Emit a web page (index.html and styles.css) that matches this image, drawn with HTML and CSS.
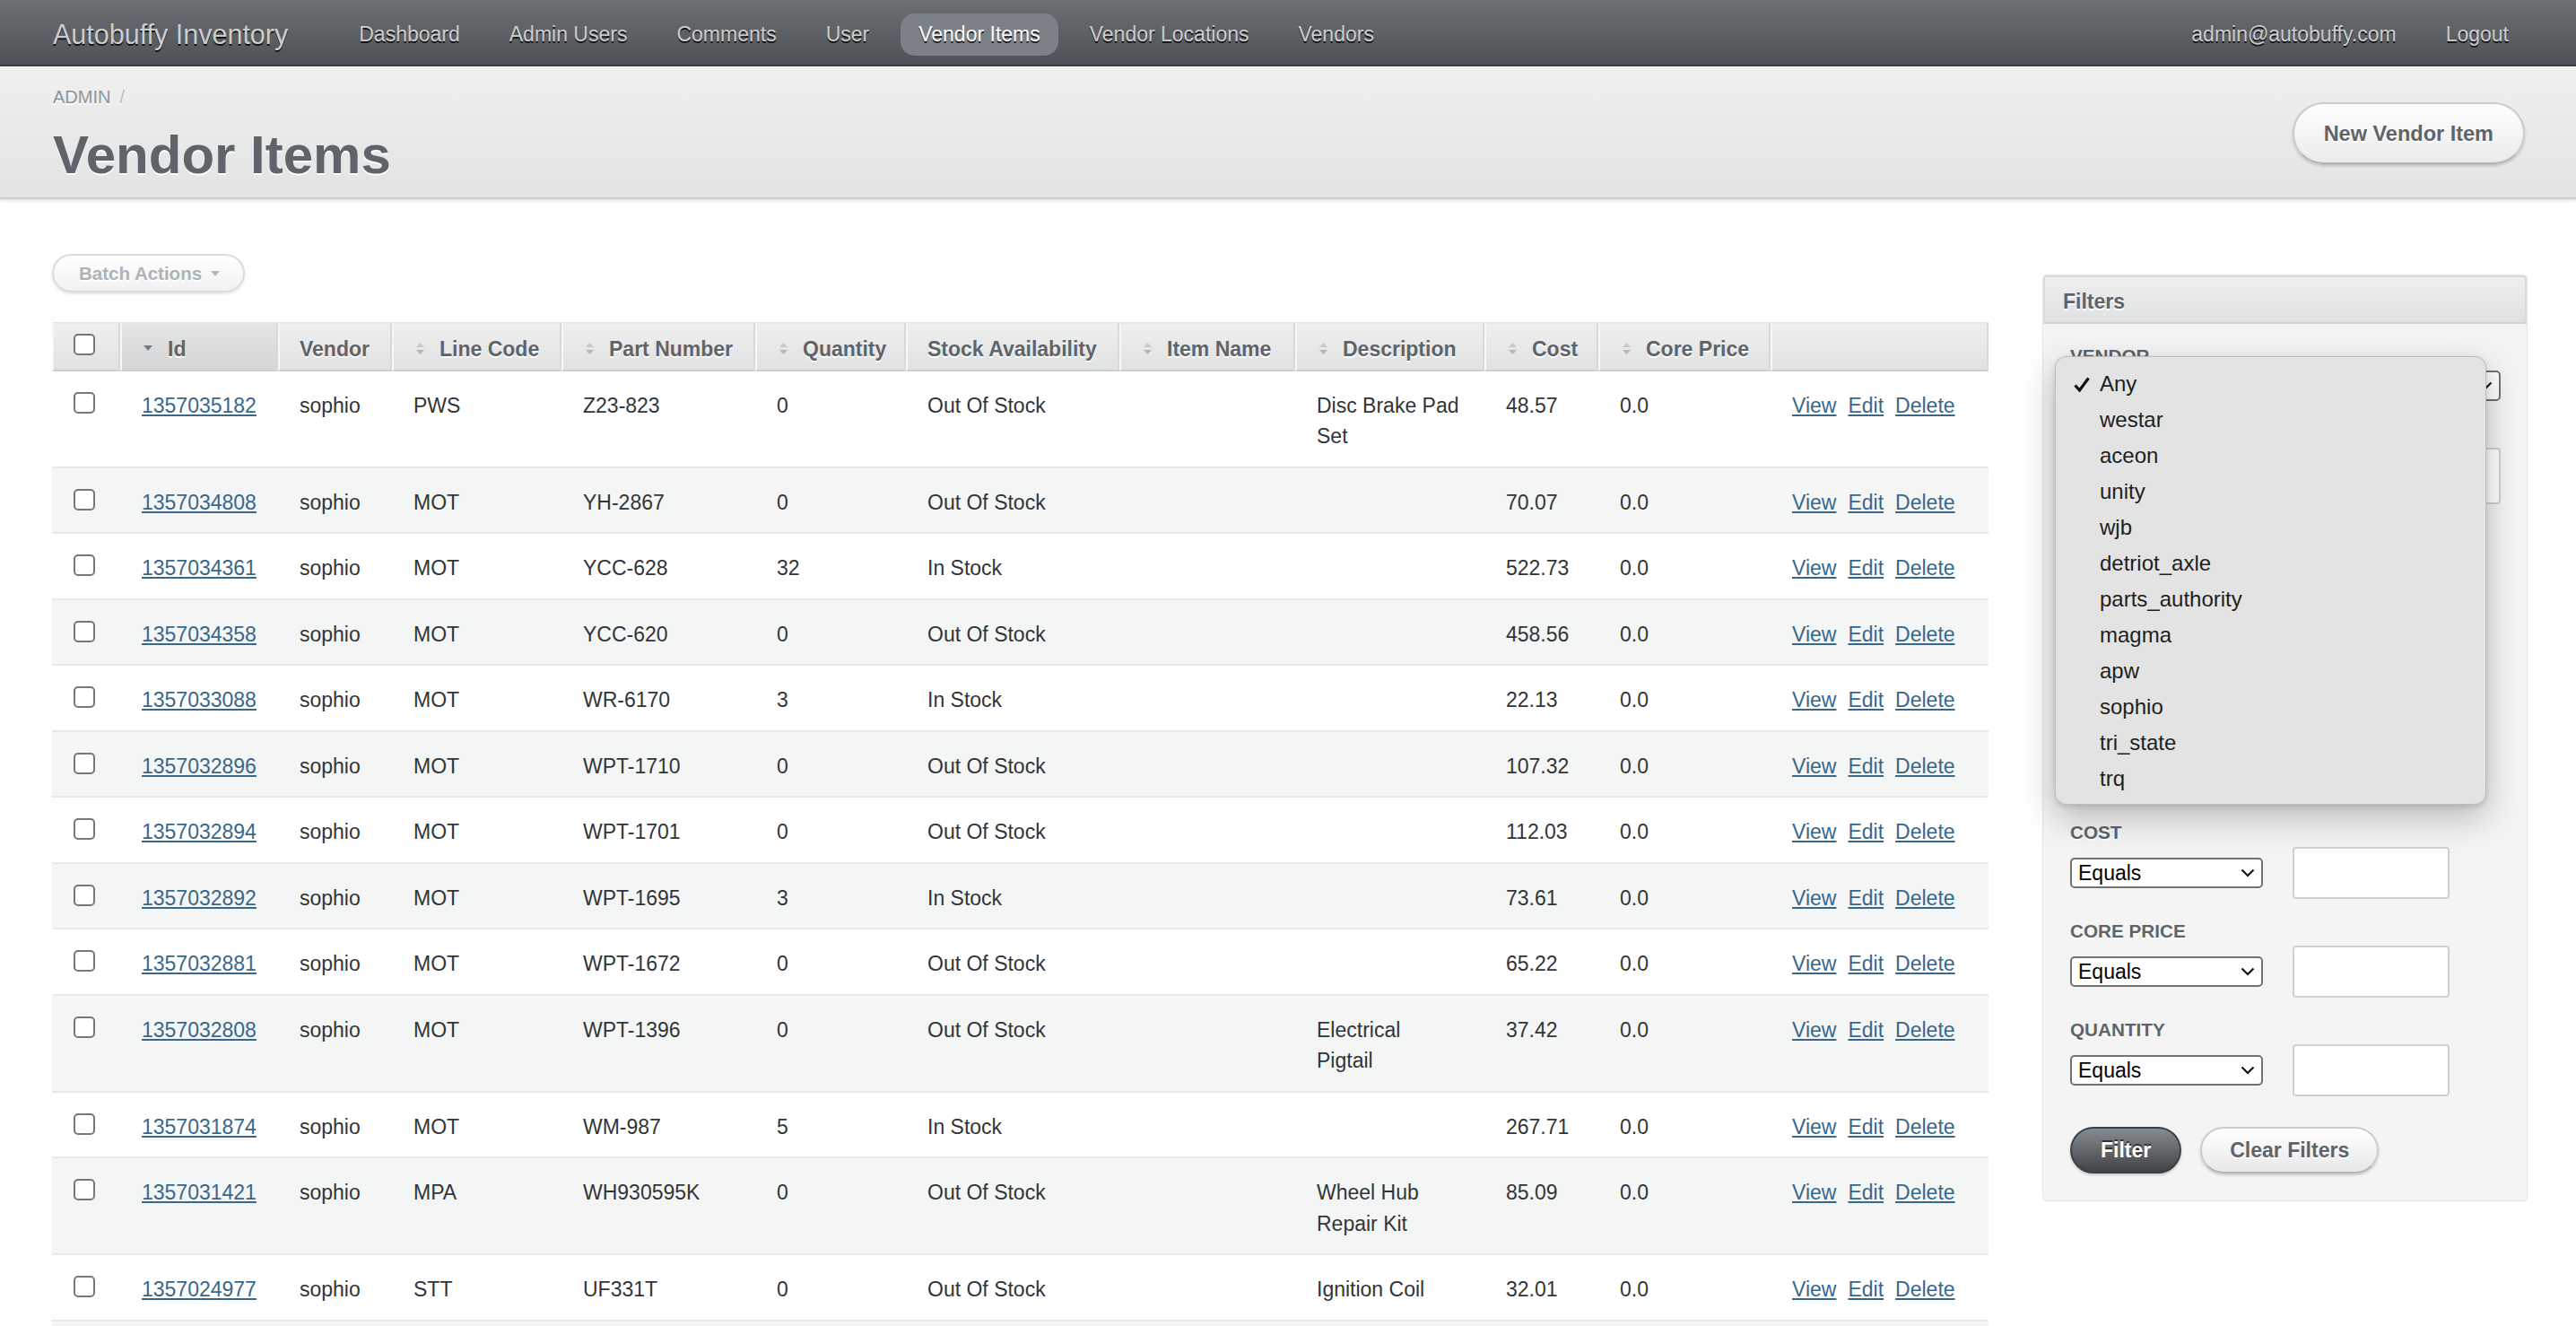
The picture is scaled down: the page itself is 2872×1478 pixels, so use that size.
FILE: index.html
```html
<!DOCTYPE html>
<html lang="en">
<head>
<meta charset="utf-8">
<title>Vendor Items | Autobuffy Inventory</title>
<link rel="stylesheet" href="styles.css">
</head>
<body>
<header class="topbar">
  <h1 class="site-title">Autobuffy Inventory</h1>
  <ul class="tabs">
    <li><a class="tab" href="#">Dashboard</a></li>
    <li><a class="tab" href="#">Admin Users</a></li>
    <li><a class="tab" href="#">Comments</a></li>
    <li><a class="tab" href="#">User</a></li>
    <li><a class="tab tab-current" href="#">Vendor Items</a></li>
    <li><a class="tab" href="#">Vendor Locations</a></li>
    <li><a class="tab" href="#">Vendors</a></li>
  </ul>
  <ul class="tabs utility">
    <li><a class="tab" href="#">admin@autobuffy.com</a></li>
    <li><a class="tab" href="#">Logout</a></li>
  </ul>
</header>

<div class="title-bar">
  <div class="title-main">
    <div class="breadcrumb"><a href="#">Admin</a><span class="crumb-sep">/</span></div>
    <h2 class="page-title">Vendor Items</h2>
  </div>
  <a class="action-btn" href="#">New Vendor Item</a>
</div>

<div class="content">
  <main class="main">
    <div class="batch">
      <button class="batch-btn" type="button">Batch Actions
        <svg class="batch-caret" width="10" height="6" viewBox="0 0 10 6"><path d="M0 0H10L5 6Z" fill="#b4b8bb"/></svg>
      </button>
    </div>

    <table class="index-table">
      <thead>
        <tr>
          <th class="c-cb"><input type="checkbox" class="cb"></th>
          <th class="c-id sorted"><a class="sort-link" href="#"><svg class="sort-ico sort-desc" width="10" height="6" viewBox="0 0 10 6"><path d="M0 0H10L5 6Z" fill="#767b80"/></svg>Id</a></th>
          <th class="c-vendor">Vendor</th>
          <th class="c-line"><a class="sort-link" href="#"><svg class="sort-ico" width="9" height="13" viewBox="0 0 9 13"><path d="M4.5 0L9 5H0Z" fill="#c6c9cc"/><path d="M0 8H9L4.5 13Z" fill="#b3b7ba"/></svg>Line Code</a></th>
          <th class="c-part"><a class="sort-link" href="#"><svg class="sort-ico" width="9" height="13" viewBox="0 0 9 13"><path d="M4.5 0L9 5H0Z" fill="#c6c9cc"/><path d="M0 8H9L4.5 13Z" fill="#b3b7ba"/></svg>Part Number</a></th>
          <th class="c-qty"><a class="sort-link" href="#"><svg class="sort-ico" width="9" height="13" viewBox="0 0 9 13"><path d="M4.5 0L9 5H0Z" fill="#c6c9cc"/><path d="M0 8H9L4.5 13Z" fill="#b3b7ba"/></svg>Quantity</a></th>
          <th class="c-stock">Stock Availability</th>
          <th class="c-item"><a class="sort-link" href="#"><svg class="sort-ico" width="9" height="13" viewBox="0 0 9 13"><path d="M4.5 0L9 5H0Z" fill="#c6c9cc"/><path d="M0 8H9L4.5 13Z" fill="#b3b7ba"/></svg>Item Name</a></th>
          <th class="c-desc"><a class="sort-link" href="#"><svg class="sort-ico" width="9" height="13" viewBox="0 0 9 13"><path d="M4.5 0L9 5H0Z" fill="#c6c9cc"/><path d="M0 8H9L4.5 13Z" fill="#b3b7ba"/></svg>Description</a></th>
          <th class="c-cost"><a class="sort-link" href="#"><svg class="sort-ico" width="9" height="13" viewBox="0 0 9 13"><path d="M4.5 0L9 5H0Z" fill="#c6c9cc"/><path d="M0 8H9L4.5 13Z" fill="#b3b7ba"/></svg>Cost</a></th>
          <th class="c-core"><a class="sort-link" href="#"><svg class="sort-ico" width="9" height="13" viewBox="0 0 9 13"><path d="M4.5 0L9 5H0Z" fill="#c6c9cc"/><path d="M0 8H9L4.5 13Z" fill="#b3b7ba"/></svg>Core Price</a></th>
          <th class="c-actions"></th>
        </tr>
      </thead>
      <tbody>
        <tr class="odd">
          <td><input type="checkbox" class="cb"></td><td><a href="#">1357035182</a></td><td>sophio</td><td>PWS</td><td>Z23-823</td><td>0</td><td>Out Of Stock</td><td></td><td>Disc Brake Pad Set</td><td>48.57</td><td>0.0</td>
          <td class="actions"><a class="member-link" href="#">View</a><a class="member-link" href="#">Edit</a><a class="member-link" href="#">Delete</a></td>
        </tr>
        <tr class="even">
          <td><input type="checkbox" class="cb"></td><td><a href="#">1357034808</a></td><td>sophio</td><td>MOT</td><td>YH-2867</td><td>0</td><td>Out Of Stock</td><td></td><td></td><td>70.07</td><td>0.0</td>
          <td class="actions"><a class="member-link" href="#">View</a><a class="member-link" href="#">Edit</a><a class="member-link" href="#">Delete</a></td>
        </tr>
        <tr class="odd">
          <td><input type="checkbox" class="cb"></td><td><a href="#">1357034361</a></td><td>sophio</td><td>MOT</td><td>YCC-628</td><td>32</td><td>In Stock</td><td></td><td></td><td>522.73</td><td>0.0</td>
          <td class="actions"><a class="member-link" href="#">View</a><a class="member-link" href="#">Edit</a><a class="member-link" href="#">Delete</a></td>
        </tr>
        <tr class="even">
          <td><input type="checkbox" class="cb"></td><td><a href="#">1357034358</a></td><td>sophio</td><td>MOT</td><td>YCC-620</td><td>0</td><td>Out Of Stock</td><td></td><td></td><td>458.56</td><td>0.0</td>
          <td class="actions"><a class="member-link" href="#">View</a><a class="member-link" href="#">Edit</a><a class="member-link" href="#">Delete</a></td>
        </tr>
        <tr class="odd">
          <td><input type="checkbox" class="cb"></td><td><a href="#">1357033088</a></td><td>sophio</td><td>MOT</td><td>WR-6170</td><td>3</td><td>In Stock</td><td></td><td></td><td>22.13</td><td>0.0</td>
          <td class="actions"><a class="member-link" href="#">View</a><a class="member-link" href="#">Edit</a><a class="member-link" href="#">Delete</a></td>
        </tr>
        <tr class="even">
          <td><input type="checkbox" class="cb"></td><td><a href="#">1357032896</a></td><td>sophio</td><td>MOT</td><td>WPT-1710</td><td>0</td><td>Out Of Stock</td><td></td><td></td><td>107.32</td><td>0.0</td>
          <td class="actions"><a class="member-link" href="#">View</a><a class="member-link" href="#">Edit</a><a class="member-link" href="#">Delete</a></td>
        </tr>
        <tr class="odd">
          <td><input type="checkbox" class="cb"></td><td><a href="#">1357032894</a></td><td>sophio</td><td>MOT</td><td>WPT-1701</td><td>0</td><td>Out Of Stock</td><td></td><td></td><td>112.03</td><td>0.0</td>
          <td class="actions"><a class="member-link" href="#">View</a><a class="member-link" href="#">Edit</a><a class="member-link" href="#">Delete</a></td>
        </tr>
        <tr class="even">
          <td><input type="checkbox" class="cb"></td><td><a href="#">1357032892</a></td><td>sophio</td><td>MOT</td><td>WPT-1695</td><td>3</td><td>In Stock</td><td></td><td></td><td>73.61</td><td>0.0</td>
          <td class="actions"><a class="member-link" href="#">View</a><a class="member-link" href="#">Edit</a><a class="member-link" href="#">Delete</a></td>
        </tr>
        <tr class="odd">
          <td><input type="checkbox" class="cb"></td><td><a href="#">1357032881</a></td><td>sophio</td><td>MOT</td><td>WPT-1672</td><td>0</td><td>Out Of Stock</td><td></td><td></td><td>65.22</td><td>0.0</td>
          <td class="actions"><a class="member-link" href="#">View</a><a class="member-link" href="#">Edit</a><a class="member-link" href="#">Delete</a></td>
        </tr>
        <tr class="even">
          <td><input type="checkbox" class="cb"></td><td><a href="#">1357032808</a></td><td>sophio</td><td>MOT</td><td>WPT-1396</td><td>0</td><td>Out Of Stock</td><td></td><td>Electrical<br>Pigtail</td><td>37.42</td><td>0.0</td>
          <td class="actions"><a class="member-link" href="#">View</a><a class="member-link" href="#">Edit</a><a class="member-link" href="#">Delete</a></td>
        </tr>
        <tr class="odd">
          <td><input type="checkbox" class="cb"></td><td><a href="#">1357031874</a></td><td>sophio</td><td>MOT</td><td>WM-987</td><td>5</td><td>In Stock</td><td></td><td></td><td>267.71</td><td>0.0</td>
          <td class="actions"><a class="member-link" href="#">View</a><a class="member-link" href="#">Edit</a><a class="member-link" href="#">Delete</a></td>
        </tr>
        <tr class="even">
          <td><input type="checkbox" class="cb"></td><td><a href="#">1357031421</a></td><td>sophio</td><td>MPA</td><td>WH930595K</td><td>0</td><td>Out Of Stock</td><td></td><td>Wheel Hub Repair Kit</td><td>85.09</td><td>0.0</td>
          <td class="actions"><a class="member-link" href="#">View</a><a class="member-link" href="#">Edit</a><a class="member-link" href="#">Delete</a></td>
        </tr>
        <tr class="odd">
          <td><input type="checkbox" class="cb"></td><td><a href="#">1357024977</a></td><td>sophio</td><td>STT</td><td>UF331T</td><td>0</td><td>Out Of Stock</td><td></td><td>Ignition Coil</td><td>32.01</td><td>0.0</td>
          <td class="actions"><a class="member-link" href="#">View</a><a class="member-link" href="#">Edit</a><a class="member-link" href="#">Delete</a></td>
        </tr>
        <tr class="even">
          <td><input type="checkbox" class="cb"></td><td><a href="#">1357024810</a></td><td>sophio</td><td>STT</td><td>UF330T</td><td>0</td><td>Out Of Stock</td><td></td><td>Ignition Coil</td><td>29.87</td><td>0.0</td>
          <td class="actions"><a class="member-link" href="#">View</a><a class="member-link" href="#">Edit</a><a class="member-link" href="#">Delete</a></td>
        </tr>
      </tbody>
    </table>
  </main>

  <aside class="sidebar">
    <section class="panel">
      <h3 class="panel-head">Filters</h3>
      <div class="panel-body">
        <div class="filter">
          <label class="filter-label">Vendor</label>
          <div class="select-wrap wide">
            <select class="select"><option>Any</option></select>
            <svg class="chev" width="16" height="10" viewBox="0 0 16 10"><path d="M1.5 1.5L8 8L14.5 1.5" fill="none" stroke="#111" stroke-width="2.2"/></svg>
          </div>
        </div>
        <div class="filter">
          <label class="filter-label">Part Number</label>
          <input class="text-input wide" type="text">
        </div>
        <div class="filter">
          <label class="filter-label">Line Code</label>
          <div class="filter-row">
            <div class="select-wrap"><select class="select"><option>Contains</option></select><svg class="chev" width="16" height="10" viewBox="0 0 16 10"><path d="M1.5 1.5L8 8L14.5 1.5" fill="none" stroke="#111" stroke-width="2.2"/></svg></div>
            <input class="text-input" type="text">
          </div>
        </div>
        <div class="filter">
          <label class="filter-label">Item Name</label>
          <div class="filter-row">
            <div class="select-wrap"><select class="select"><option>Contains</option></select><svg class="chev" width="16" height="10" viewBox="0 0 16 10"><path d="M1.5 1.5L8 8L14.5 1.5" fill="none" stroke="#111" stroke-width="2.2"/></svg></div>
            <input class="text-input" type="text">
          </div>
        </div>
        <div class="filter">
          <label class="filter-label">Description</label>
          <div class="filter-row">
            <div class="select-wrap"><select class="select"><option>Contains</option></select><svg class="chev" width="16" height="10" viewBox="0 0 16 10"><path d="M1.5 1.5L8 8L14.5 1.5" fill="none" stroke="#111" stroke-width="2.2"/></svg></div>
            <input class="text-input" type="text">
          </div>
        </div>
        <div class="filter">
          <label class="filter-label">Cost</label>
          <div class="filter-row">
            <div class="select-wrap"><select class="select"><option>Equals</option></select><svg class="chev" width="16" height="10" viewBox="0 0 16 10"><path d="M1.5 1.5L8 8L14.5 1.5" fill="none" stroke="#111" stroke-width="2.2"/></svg></div>
            <input class="text-input" type="text">
          </div>
        </div>
        <div class="filter">
          <label class="filter-label">Core Price</label>
          <div class="filter-row">
            <div class="select-wrap"><select class="select"><option>Equals</option></select><svg class="chev" width="16" height="10" viewBox="0 0 16 10"><path d="M1.5 1.5L8 8L14.5 1.5" fill="none" stroke="#111" stroke-width="2.2"/></svg></div>
            <input class="text-input" type="text">
          </div>
        </div>
        <div class="filter">
          <label class="filter-label">Quantity</label>
          <div class="filter-row">
            <div class="select-wrap"><select class="select"><option>Equals</option></select><svg class="chev" width="16" height="10" viewBox="0 0 16 10"><path d="M1.5 1.5L8 8L14.5 1.5" fill="none" stroke="#111" stroke-width="2.2"/></svg></div>
            <input class="text-input" type="text">
          </div>
        </div>
        <div class="filter-actions">
          <button class="btn-dark" type="button">Filter</button>
          <button class="btn-light" type="button">Clear Filters</button>
        </div>

        <ul class="dropdown">
          <li class="dd-item dd-selected"><svg class="dd-check" width="18" height="17" viewBox="0 0 18 17"><path d="M1.5 9.5L6.5 15L16.5 1.5" fill="none" stroke="#111" stroke-width="3.2"/></svg>Any</li>
          <li class="dd-item">westar</li>
          <li class="dd-item">aceon</li>
          <li class="dd-item">unity</li>
          <li class="dd-item">wjb</li>
          <li class="dd-item">detriot_axle</li>
          <li class="dd-item">parts_authority</li>
          <li class="dd-item">magma</li>
          <li class="dd-item">apw</li>
          <li class="dd-item">sophio</li>
          <li class="dd-item">tri_state</li>
          <li class="dd-item">trq</li>
        </ul>
      </div>
    </section>
  </aside>
</div>
</body>
</html>
```

FILE: styles.css
```css
* { box-sizing: border-box; }

html { overflow: hidden; }

body {
  margin: 0;
  background: #ffffff;
  font-family: "Liberation Sans", Arial, Helvetica, sans-serif;
  font-size: 23px;
  line-height: 34.5px;
  color: #323537;
}

a { color: #38678b; }

/* ---------- top navigation ---------- */
.topbar {
  display: flex;
  align-items: center;
  height: 74px;
  padding: 4px 55px 0 59px;
  background: linear-gradient(#6c7075, #4e5256);
  border-bottom: 2px solid #3c3f42;
}

.site-title {
  margin: 0 59px 0 0;
  font-size: 30.5px;
  line-height: 36px;
  font-weight: normal;
  color: #cdcdcd;
  white-space: nowrap;
  text-shadow: 0 2px 0 rgba(0, 0, 0, 0.8);
}

.tabs {
  display: flex;
  gap: 15px;
  list-style: none;
  margin: 0;
  padding: 0;
}

.utility { margin-left: auto; }

.tab {
  display: block;
  padding: 10px 20px;
  font-size: 23px;
  line-height: 27px;
  color: #cdcdcd;
  text-decoration: none;
  white-space: nowrap;
  border-radius: 16px;
  text-shadow: 0 2px 0 rgba(0, 0, 0, 0.8);
}

.tab-current {
  background: #7b8186;
  color: #ffffff;
}

/* ---------- title bar ---------- */
.title-bar {
  display: flex;
  height: 148px;
  padding: 19px 57px 0 59px;
  background: linear-gradient(#f0f0f0, #e2e3e4);
  border-bottom: 2px solid #cdcdcd;
  box-shadow: 0 2px 3px rgba(0, 0, 0, 0.12);
}

.title-main { flex: 1; }

.breadcrumb {
  font-size: 20px;
  line-height: 30px;
  color: #8a949e;
  text-transform: uppercase;
  text-shadow: 0 2px 0 #ffffff;
}

.breadcrumb a {
  color: #8a949e;
  text-decoration: none;
}

.crumb-sep {
  margin-left: 10px;
  color: #b3b9be;
}

.page-title {
  margin: 14px 0 0;
  font-size: 60px;
  line-height: 71px;
  font-weight: bold;
  color: #5e6469;
  text-shadow: 0 2px 0 #ffffff;
}

.action-btn {
  align-self: flex-start;
  margin-top: 21px;
  padding: 16px 33px 15px;
  font-size: 23.5px;
  line-height: 34px;
  font-weight: bold;
  color: #5e6469;
  text-decoration: none;
  white-space: nowrap;
  text-shadow: 0 2px 0 #ffffff;
  background: linear-gradient(#ffffff, #ebebeb);
  border: 2px solid #cbcbcb;
  border-bottom-color: #b5b5b5;
  border-radius: 40px;
  box-shadow: 0 2px 3px rgba(0, 0, 0, 0.18);
}

/* ---------- content ---------- */
.content {
  display: flex;
  gap: 61px;
  padding: 61px 55px 0 58px;
}

.main {
  flex: 1;
  min-width: 0;
}

.batch {
  height: 43px;
  margin-bottom: 33px;
}

.batch-btn {
  display: inline-flex;
  align-items: center;
  gap: 10px;
  height: 43px;
  padding: 0 26px 0 28px;
  font-family: "Liberation Sans", Arial, sans-serif;
  font-size: 20.5px;
  line-height: 24px;
  font-weight: bold;
  color: #aeb3b7;
  text-shadow: 0 2px 0 #ffffff;
  background: linear-gradient(#ffffff, #f1f1f1);
  border: 2px solid #dcdcdc;
  border-radius: 22px;
  box-shadow: 0 2px 3px rgba(0, 0, 0, 0.1);
}

/* ---------- index table ---------- */
.index-table {
  width: 100%;
  table-layout: fixed;
  border-collapse: separate;
  border-spacing: 0;
}

.index-table th {
  text-align: left;
  vertical-align: top;
  padding: 11px 22px 5px 22px;
  font-weight: bold;
  color: #5e6469;
  white-space: nowrap;
  text-shadow: 0 2px 0 #ffffff;
  background: linear-gradient(#efefef, #e0e1e2);
  border-top: 2px solid #e6e7e8;
  border-bottom: 2px solid #cdcecf;
  border-left: 2px solid #f7f7f7;
  border-right: 2px solid #d8d9da;
}

.index-table th.sorted {
  background: linear-gradient(#e3e4e5, #d4d6d7);
}

.c-cb { width: 76px; }
.c-id { width: 176px; }
.c-vendor { width: 127px; }
.c-line { width: 189px; }
.c-part { width: 216px; }
.c-qty { width: 168px; }
.c-stock { width: 238px; }
.c-item { width: 196px; }
.c-desc { width: 211px; }
.c-cost { width: 127px; }
.c-core { width: 192px; }

.sort-link {
  position: relative;
  display: inline-block;
  padding-left: 29px;
  color: #5e6469;
  text-decoration: none;
}

.sort-ico {
  position: absolute;
  left: 3px;
  top: 10px;
}

.sort-desc { top: 13px; left: 2px; }

.index-table td {
  vertical-align: top;
  padding: 21px 24px 16px;
  border-bottom: 2px solid #e8e9ea;
}

.index-table tr.even td { background: #f4f5f5; }

.index-table td.actions { white-space: nowrap; }

.member-link { margin-right: 13px; }

.cb {
  -webkit-appearance: none;
  appearance: none;
  display: block;
  width: 24px;
  height: 24px;
  margin: 2px 0 0;
  background: #ffffff;
  border: 2px solid #777777;
  border-radius: 5px;
}

.index-table th .cb { margin-top: 0; }

/* ---------- sidebar ---------- */
.sidebar {
  flex: none;
  width: 539px;
  margin-top: 24px;
}

.panel {
  background: #f4f4f4;
  border-radius: 4px;
  box-shadow: 0 0 0 1px #e7e7e7, 0 1px 3px rgba(0, 0, 0, 0.06);
}

.panel-head {
  margin: 0;
  height: 54px;
  padding: 10px 20px 6px;
  font-size: 23px;
  line-height: 34px;
  font-weight: bold;
  color: #5e6469;
  text-shadow: 0 2px 0 #ffffff;
  background: linear-gradient(#efefef, #e0e1e2);
  border: 2px solid #d9dadb;
  border-bottom-color: #cfd0d1;
  border-radius: 4px 4px 0 0;
}

.panel-body {
  position: relative;
  padding: 24px 29px 30px 30px;
}

.filter { margin-bottom: 24px; }

.filter-label {
  display: block;
  margin-bottom: 4px;
  font-size: 20.7px;
  line-height: 24px;
  font-weight: bold;
  color: #5e6469;
  text-transform: uppercase;
  text-shadow: 0 2px 0 #ffffff;
}

.filter-row {
  display: flex;
  align-items: center;
  gap: 33px;
}

.select-wrap {
  position: relative;
  width: 215px;
  height: 34px;
}

.select-wrap.wide { width: 480px; }

.select {
  -webkit-appearance: none;
  appearance: none;
  display: block;
  width: 100%;
  height: 34px;
  margin: 0;
  padding: 0 30px 0 7px;
  font-family: "Liberation Sans", Arial, sans-serif;
  font-size: 23px;
  color: #000000;
  background: #ffffff;
  border: 2px solid #727272;
  border-radius: 5px;
}

.chev {
  position: absolute;
  right: 9px;
  top: 12px;
  pointer-events: none;
}

.text-input {
  display: block;
  width: 175px;
  height: 58px;
  margin: 0;
  padding: 0 10px;
  background: #ffffff;
  border: 2px solid #ccd1d5;
  border-radius: 4px;
}

.text-input.wide {
  width: 480px;
  height: 63px;
}

.filter-actions {
  display: flex;
  gap: 21px;
  margin-top: 34px;
}

.btn-dark,
.btn-light {
  height: 52px;
  padding: 0 32px;
  font-family: "Liberation Sans", Arial, sans-serif;
  font-size: 23px;
  line-height: 48px;
  font-weight: bold;
  border-radius: 26px;
  box-shadow: 0 2px 3px rgba(0, 0, 0, 0.18);
}

.btn-dark {
  color: #ffffff;
  text-shadow: 0 -2px 0 rgba(0, 0, 0, 0.6);
  background: linear-gradient(#868b90, #3f4347);
  border: 2px solid #3d4145;
}

.btn-light {
  padding: 0 31px;
  color: #5e6469;
  text-shadow: 0 2px 0 #ffffff;
  background: linear-gradient(#ffffff, #e8e8e8);
  border: 2px solid #cbcbcb;
  border-bottom-color: #b5b5b5;
}

/* native select popup, open over the filters */
.dropdown {
  position: absolute;
  left: 13px;
  top: 36px;
  width: 481px;
  height: 500px;
  margin: 0;
  padding: 10px 0 10px;
  list-style: none;
  background: #e3e3e3;
  border: 1px solid rgba(0, 0, 0, 0.16);
  border-radius: 13px;
  box-shadow: 0 14px 38px rgba(0, 0, 0, 0.25), 0 2px 6px rgba(0, 0, 0, 0.12);
  z-index: 10;
}

.dd-item {
  position: relative;
  padding-left: 49px;
  font-size: 24px;
  line-height: 40px;
  color: #1e1e1e;
}

.dd-check {
  position: absolute;
  left: 20px;
  top: 12px;
}
```
